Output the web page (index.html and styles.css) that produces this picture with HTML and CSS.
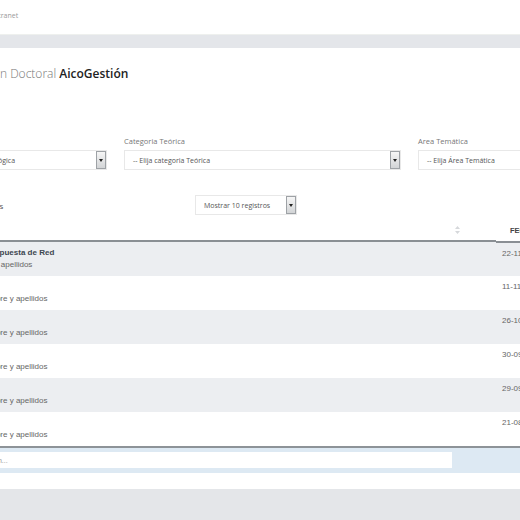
FILE: index.html
```html
<!DOCTYPE html>
<html lang="es">
<head>
  <meta charset="UTF-8" />
  <title>Formación Doctoral AicoGestión</title>
  <link rel="stylesheet" href="styles.css">
</head>
<body>
  <div class="navbar">
    <div class="page nav-inner">
      <span class="logo"></span>
      <span class="brand">Intranet</span>
    </div>
  </div>
  <div class="band"></div>

  <div class="card">
    <div class="page">
      <h1><span class="light">Área de Formación Doctoral</span> <b>AicoGestión</b></h1>

      <!-- Filtros -->
      <div class="filters">
        <div class="field">
          <label>Línea</label>
          <div class="select">
            <span class="select-text">-- Elija una Línea Metodológica</span>
            <span class="arrow"></span>
          </div>
        </div>
        <div class="field">
          <label>Categoria Teórica</label>
          <div class="select">
            <span class="select-text">-- Elija categoria Teórica</span>
            <span class="arrow"></span>
          </div>
        </div>
        <div class="field">
          <label>Area Temática</label>
          <div class="select">
            <span class="select-text">-- Elija Área Temática</span>
            <span class="arrow"></span>
          </div>
        </div>
      </div>

      <div class="toolbar">
        <div class="count">Se han encontrado 6 tesis</div>
        <div class="select small">
          <span class="select-text">Mostrar 10 registros</span>
          <span class="arrow"></span>
        </div>
      </div>

      <!-- Listado -->
      <table class="list">
        <colgroup>
          <col class="c-num">
          <col class="c-title">
          <col class="c-date">
        </colgroup>
        <thead>
          <tr>
            <th>#</th>
            <th class="sortable">Tesis
              <svg class="sort" width="5" height="8" viewBox="0 0 5 8"><path d="M2.5 0L5 3H0zM2.5 8L0 5h5z" fill="#d6d8db"/></svg>
            </th>
            <th class="date-head">FECHA</th>
          </tr>
        </thead>
        <tbody>
          <tr>
            <td>1</td>
            <td><div class="title">A propuesta de Red</div><div class="author">Otros apellidos</div></td>
            <td class="date">22-11-2015</td>
          </tr>
          <tr>
            <td>2</td>
            <td><div class="title">&nbsp;</div><div class="author">Nombre y apellidos</div></td>
            <td class="date">11-11-2015</td>
          </tr>
          <tr>
            <td>3</td>
            <td><div class="title">&nbsp;</div><div class="author">Nombre y apellidos</div></td>
            <td class="date">26-10-2015</td>
          </tr>
          <tr>
            <td>4</td>
            <td><div class="title">&nbsp;</div><div class="author">Nombre y apellidos</div></td>
            <td class="date">30-09-2015</td>
          </tr>
          <tr>
            <td>5</td>
            <td><div class="title">&nbsp;</div><div class="author">Nombre y apellidos</div></td>
            <td class="date">29-09-2015</td>
          </tr>
          <tr>
            <td>6</td>
            <td><div class="title">&nbsp;</div><div class="author">Nombre y apellidos</div></td>
            <td class="date">21-08-2015</td>
          </tr>
        </tbody>
        <tfoot>
          <tr>
            <td colspan="2"><input type="text" placeholder="Buscar por una descripción..."></td>
            <td></td>
          </tr>
        </tfoot>
      </table>
    </div>
  </div>
</body>
</html>
```

FILE: styles.css
```css
body {
  margin: 0;
  background-color: #e4e6e9;
  font-family: 'Open Sans', sans-serif;
  color: #555;
  overflow: hidden;
}

.page {
  width: 820px;
  margin-left: -93px;
}

.navbar {
  background: #fff;
  height: 34px;
}

.nav-inner {
  display: flex;
  align-items: center;
  height: 30px;
}

.logo {
  width: 70px;
  height: 20px;
  margin-right: 15px;
}

.brand {
  font-size: 7px;
  color: #9a9a9a;
}

.band {
  height: 13px;
  background: #e4e6ea;
  border-top: 1px solid #eef0ee;
}

.card {
  background: #fff;
  padding: 17px 0 16px;
}

h1 {
  margin: 0 0 0 -2px;
  font-size: 12px;
  line-height: 18px;
  font-weight: normal;
  color: #222;
}

h1 .light {
  font-weight: 300;
  color: #777;
}

h1 b {
  font-weight: 600;
}

.filters {
  display: grid;
  grid-template-columns: 200px 277px 277px;
  gap: 17px;
  margin-top: 53px;
}

.field label {
  display: block;
  font-size: 7.5px;
  line-height: 11px;
  color: #777;
  margin-bottom: 3px;
}

.select {
  display: flex;
  align-items: center;
  height: 18px;
  border: 1px solid #e8e8e8;
  background: #fff;
  padding-left: 8px;
}

.select-text {
  font-size: 7px;
  color: #555;
  flex: 1;
  white-space: nowrap;
}

.arrow {
  flex: none;
  width: 8px;
  height: 16px;
  border: 1px solid #9ea2a6;
  background: linear-gradient(#f6f6f6, #d2d4d6);
  display: flex;
  align-items: center;
  justify-content: center;
}

.arrow::after {
  content: "";
  border-left: 2px solid transparent;
  border-right: 2px solid transparent;
  border-top: 3px solid #222;
}

.toolbar {
  display: flex;
  align-items: center;
  margin-top: 25px;
}

.count {
  width: 288px;
  font-size: 8px;
  color: #555;
}

.select.small {
  width: 92px;
}

.list {
  width: 710px;
  table-layout: fixed;
  border-collapse: collapse;
  margin-top: 5px;
  font-family: 'Liberation Sans', Arial, sans-serif;
  font-size: 8px;
}

.c-num { width: 68px; }
.c-title { width: 521px; }
.c-date { width: 121px; }

.list th {
  text-align: left;
  padding: 4px 6px;
  line-height: 12px;
  font-size: 7.5px;
  font-weight: bold;
  color: #444;
  border-bottom: 2px solid #8a8f94;
}

.list th.date-head {
  padding-left: 14px;
}

.list thead th:first-child,
.list thead th.sortable {
  color: #fff;
}

.sortable {
  display: flex;
  justify-content: space-between;
  align-items: center;
  padding-right: 36px !important;
}

.list td {
  padding: 5px 4px;
  line-height: 12px;
  vertical-align: top;
  color: #666;
}

.list tbody tr:nth-child(odd) {
  background: #eceef1;
}

.list td:first-child {
  color: #eceef1;
}

.title {
  font-weight: bold;
  color: #3d4650;
}

.date {
  padding-left: 6px !important;
  color: #6a6a6a;
}

.list tbody tr:last-child td {
  border-bottom: 2px solid #8d9398;
}

.list tfoot td {
  background: #dde9f3;
  padding: 4px 4px 5px;
}

.list input {
  width: 541px;
  height: 16px;
  box-sizing: border-box;
  border: none;
  background: #fff;
  padding: 0 6px;
  font-family: 'Liberation Sans', Arial, sans-serif;
  font-size: 7px;
  display: block;
}

.list input::placeholder {
  color: #999;
}
```
